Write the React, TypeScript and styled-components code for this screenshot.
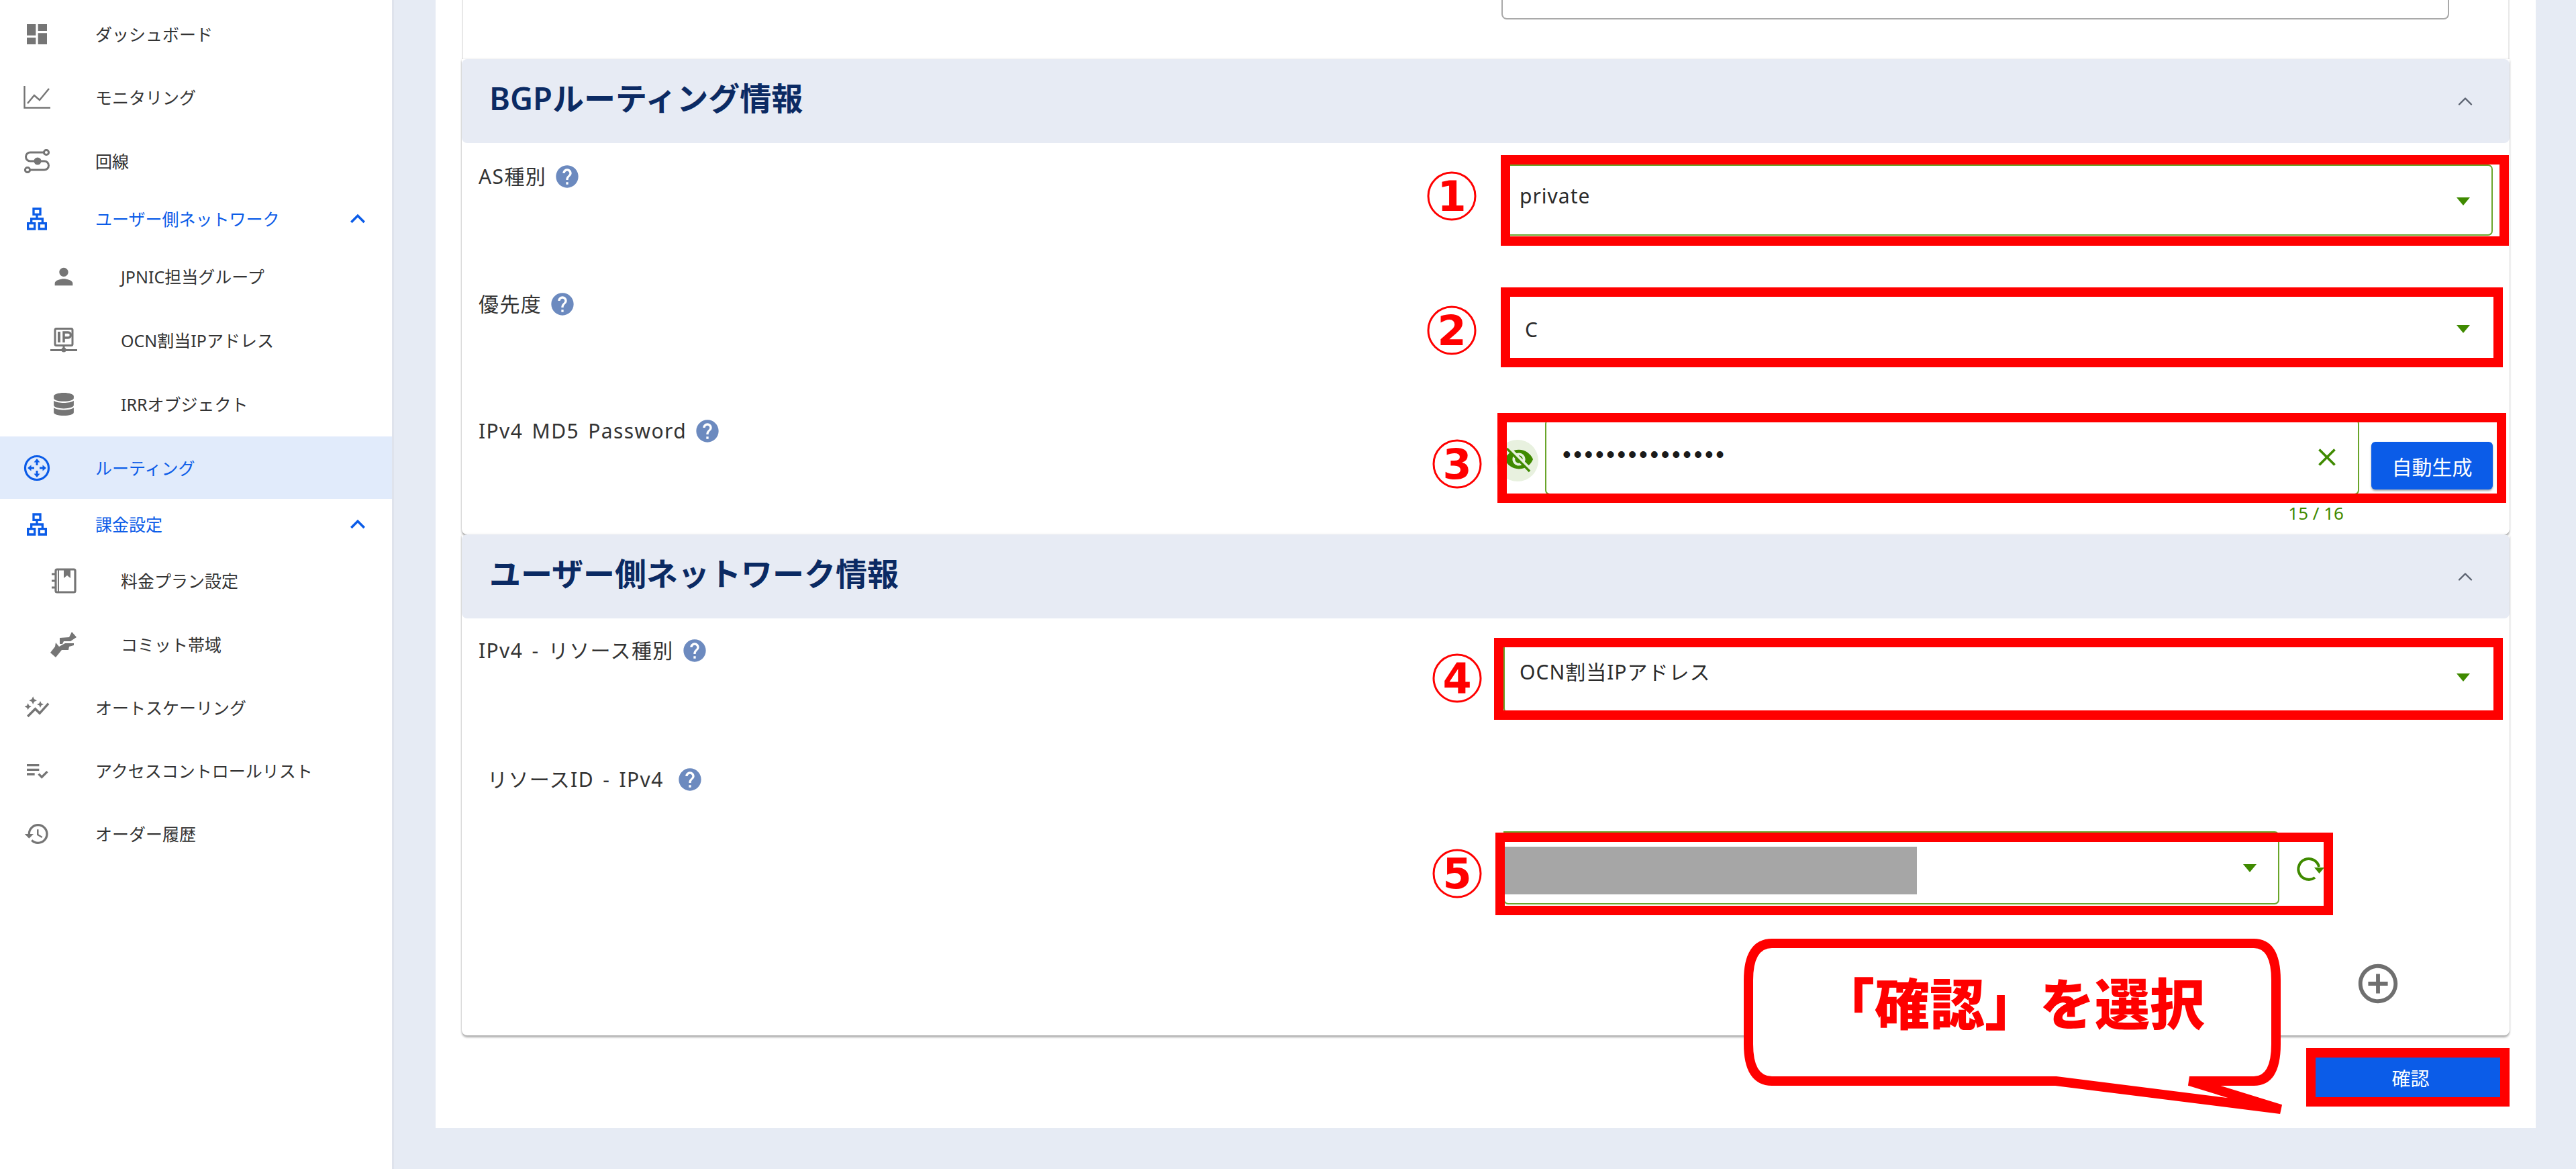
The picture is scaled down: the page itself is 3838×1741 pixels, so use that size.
import type { FC, ReactNode } from 'react';
import styled, { createGlobalStyle } from 'styled-components';
import { ChevronUp } from 'lucide-react';
import { FaDatabase } from 'react-icons/fa';
import {
  MdAddCircleOutline,
  MdAutoGraph,
  MdClose,
  MdDashboard,
  MdHelp,
  MdHistory,
  MdKeyboardArrowUp,
  MdOutlineLan,
  MdPerson,
  MdPlaylistAddCheck,
  MdVisibilityOff,
} from 'react-icons/md';

const BLUE = '#0b5ce8';
const GREEN = '#3f8a00';
const LINE_GREEN = '#6aa52a';
const GREY = '#757575';
const RED = '#ff0000';

const GlobalStyle = createGlobalStyle`
  html, body {
    margin: 0;
    padding: 0;
    background: #e6ebf4;
    font-family: 'Noto Sans', 'Noto Sans CJK JP', sans-serif;
    color: #2b2b2b;
  }
`;

const Page = styled.div`
  position: relative;
  display: grid;
  grid-template-columns: 587px 1fr;
  width: 3838px;
  height: 1741px;
  overflow: hidden;
  background: #e6ebf4;
`;

const Sidebar = styled.nav`
  box-sizing: border-box;
  height: 100%;
  padding-top: 4px;
  background: #fff;
  border-right: 3px solid #dfe3ec;
`;

const NavRow = styled.div<{ $height: number; $sub?: boolean; $active?: boolean; $blue?: boolean }>`
  display: flex;
  align-items: center;
  height: ${(p) => p.$height}px;
  padding-left: ${(p) => (p.$sub ? 75 : 35)}px;
  background: ${(p) => (p.$active ? '#e1ebfb' : 'transparent')};
  color: ${(p) => (p.$blue ? BLUE : GREY)};
`;

const NavIcon = styled.span`
  display: flex;
  align-items: center;
  justify-content: center;
  width: 40px;
  height: 40px;
  flex: none;
`;

const NavLabel = styled.span<{ $sub?: boolean; $blue?: boolean }>`
  margin-left: ${(p) => (p.$sub ? 65 : 67)}px;
  font-size: 25px;
  line-height: 34px;
  color: ${(p) => (p.$blue ? BLUE : '#333')};
`;

const NavChevron = styled.span`
  display: flex;
  margin-left: auto;
  margin-right: 29px;
  color: ${BLUE};
`;

const Main = styled.main`
  padding-left: 62px;
`;

const Panel = styled.div`
  box-sizing: border-box;
  width: 3129px;
  height: 1680px;
  padding: 0 39px;
  background: #fff;
`;

const TopStub = styled.div`
  height: 88px;
  padding: 0 88px 0 1547px;
  border-left: 2px solid #e8e8e8;
  border-right: 2px solid #e8e8e8;
  box-sizing: border-box;
`;

const StubInput = styled.div`
  box-sizing: border-box;
  height: 29px;
  border: 2px solid #a9a9a9;
  border-top: 0;
  border-radius: 0 0 8px 8px;
`;

const Card = styled.section`
  border-radius: 0 0 8px 8px;
  box-shadow: 0 3px 3px rgba(0, 0, 0, 0.3), 0 0 3px rgba(0, 0, 0, 0.12);
`;

const SectionHead = styled.header`
  display: flex;
  align-items: center;
  justify-content: space-between;
  box-sizing: border-box;
  height: 125px;
  padding: 0 48px 0 41px;
  background: #e7ebf4;
  border-radius: 8px;
`;

const SectionTitle = styled.h2`
  margin: 0 0 10px;
  font-size: 47px;
  line-height: 60px;
  font-weight: 600;
  color: #0b2a63;
`;

const HeadChevron = styled.span`
  display: flex;
  color: #5b6270;
`;

const Body = styled.div<{ $height: number }>`
  height: ${(p) => p.$height}px;
`;

const FormRow = styled.div<{ $height: number }>`
  display: grid;
  grid-template-columns: 1552px 1474px;
  height: ${(p) => p.$height}px;
`;

const FieldLabel = styled.div<{ $top: number; $left?: number; $gap?: number }>`
  display: flex;
  align-items: center;
  gap: ${(p) => p.$gap ?? 11}px;
  height: 34px;
  padding: ${(p) => p.$top}px 0 0 ${(p) => p.$left ?? 25}px;
  font-size: 30px;
  line-height: 34px;
  letter-spacing: 1.400px;
  word-spacing: 4px;
  color: #333;
`;

const HelpIcon = styled(MdHelp)`
  flex: none;
  color: #6c8abf;
`;

const Control = styled.div<{ $top: number; $bleed?: number }>`
  padding-top: ${(p) => p.$top}px;
  margin-right: -${(p) => p.$bleed ?? 0}px;
`;

const SelectBox = styled.div<{ $height: number; $inset: number; $trail?: number }>`
  box-sizing: border-box;
  display: flex;
  align-items: center;
  justify-content: space-between;
  height: ${(p) => p.$height}px;
  padding: 0 ${(p) => p.$trail ?? 34}px 0 ${(p) => p.$inset}px;
  border: 2px solid ${LINE_GREEN};
  border-radius: 7px;
  background: #fff;
`;

const SelectValue = styled.span<{ $shift: number }>`
  margin-top: ${(p) => p.$shift}px;
  font-size: 30px;
  line-height: 40px;
  letter-spacing: 1px;
  color: #2b2b2b;
`;

const SelectArrow = styled.span<{ $shift: number }>`
  width: 0;
  height: 0;
  margin-top: ${(p) => p.$shift}px;
  border-left: 10px solid transparent;
  border-right: 10px solid transparent;
  border-top: 12px solid ${GREEN};
`;

const Redacted = styled.span`
  width: 614px;
  height: 71px;
  margin-top: 8px;
  background: #a6a6a6;
`;

const PasswordLine = styled.div`
  display: flex;
  align-items: flex-start;
`;

const EyeButton = styled.span`
  display: flex;
  align-items: center;
  justify-content: center;
  flex: none;
  width: 62px;
  height: 62px;
  margin: 31px 10px 0 -10px;
  padding-bottom: 5px;
  padding-left: 3px;
  box-sizing: border-box;
  border-radius: 50%;
  background: #e8f1df;
  color: ${GREEN};
`;

const PasswordColumn = styled.div`
  width: 1213px;
  margin-right: 18px;
  flex: none;
`;

const PasswordBox = styled.div`
  box-sizing: border-box;
  display: flex;
  align-items: center;
  justify-content: space-between;
  height: 113px;
  padding: 0 24px 0 24px;
  border: 2px solid ${LINE_GREEN};
  border-radius: 7px;
  color: ${GREEN};
`;

const Dots = styled.span`
  margin-top: -8px;
  font-family: 'Liberation Sans', sans-serif;
  font-size: 36px;
  line-height: 40px;
  letter-spacing: 3.700px;
  color: #1a1a1a;
`;

const Counter = styled.div`
  padding: 13px 23px 0 0;
  font-size: 26px;
  line-height: 28px;
  text-align: right;
  color: ${GREEN};
`;

const PrimaryButton = styled.button<{ $width: number; $height: number }>`
  width: ${(p) => p.$width}px;
  height: ${(p) => p.$height}px;
  flex: none;
  padding: 0;
  border: 0;
  border-radius: 6px;
  background: ${BLUE};
  color: #fff;
  font-family: inherit;
  font-size: 30px;
  box-shadow: 0 2px 3px rgba(0, 0, 0, 0.35);
`;

const GenerateButton = styled(PrimaryButton)`
  margin-top: 34px;
`;

const ResourceLine = styled.div`
  display: flex;
  align-items: stretch;
`;

const ResourceSelect = styled(SelectBox)`
  width: 1156px;
  border-radius: 0 7px 7px 7px;
`;

const RefreshSlot = styled.span`
  display: flex;
  align-items: center;
  padding: 4px 0 0 23px;
  color: ${GREEN};
`;

const AddLine = styled.div`
  display: flex;
  justify-content: flex-end;
  padding: 83px 161px 0 0;
  color: #6f6f6f;
`;

const ActionBar = styled.div`
  display: flex;
  justify-content: flex-end;
  padding: 33px 14px 0 0;
`;

const ConfirmButton = styled(PrimaryButton)`
  padding-left: 8px;
  border-radius: 0;
  box-shadow: none;
  font-size: 28px;
`;

/* annotations laid over the form */
const RedBox = styled.div<{ $x: number; $y: number; $w: number; $h: number }>`
  position: absolute;
  box-sizing: border-box;
  left: ${(p) => p.$x}px;
  top: ${(p) => p.$y}px;
  width: ${(p) => p.$w}px;
  height: ${(p) => p.$h}px;
  border: 14px solid ${RED};
`;

const Step = styled.span<{ $x: number; $y: number }>`
  position: absolute;
  box-sizing: border-box;
  display: flex;
  align-items: center;
  justify-content: center;
  left: ${(p) => p.$x}px;
  top: ${(p) => p.$y}px;
  width: 73px;
  height: 73px;
  transform: translate(-50%, -50%);
  border: 3px solid ${RED};
  border-radius: 50%;
  font-family: 'DejaVu Sans', sans-serif;
  font-size: 62px;
  font-weight: 700;
  line-height: 1;
  color: ${RED};
`;

const Callout = styled.div`
  position: absolute;
  left: 2590px;
  top: 1390px;
  width: 830px;
  height: 280px;
`;

const CalloutText = styled.span`
  position: absolute;
  left: 121px;
  top: 46px;
  font-size: 82px;
  font-weight: 900;
  line-height: 116px;
  white-space: nowrap;
  color: ${RED};
`;

const MonitorIcon = () => (
  <svg width="40" height="34" viewBox="0 0 40 34" fill="none" stroke="currentColor" strokeWidth="2.4">
    <path d="M1.5 0v32.500H40" />
    <path d="M6 26l10-12 8 7L38 4" />
  </svg>
);

const CircuitIcon = () => (
  <svg width="40" height="36" viewBox="0 0 40 36" fill="none" stroke="currentColor" strokeWidth="3">
    <circle cx="34" cy="5" r="3.600" />
    <circle cx="6" cy="31" r="3.600" />
    <circle cx="21" cy="18" r="4" fill="currentColor" />
    <path d="M30 5H10a6.500 6.500 0 0 0 0 13h21a6.500 6.500 0 0 1 0 13H10" />
  </svg>
);

const IpIcon = () => (
  <svg width="40" height="38" viewBox="0 0 40 38" fill="none" stroke="currentColor" strokeWidth="3">
    <rect x="7" y="1.500" width="26" height="25" rx="2" />
    <path d="M13 6v16" strokeWidth="4" />
    <path d="M20 22V7h6.500a4 4 0 0 1 0 8H20" strokeWidth="3.500" />
    <path d="M20 27v6M0 33.500h40" />
    <circle cx="20" cy="33" r="3.500" fill="currentColor" stroke="none" />
  </svg>
);

const RouterIcon = () => (
  <svg width="40" height="40" viewBox="0 0 40 40" fill="currentColor">
    <circle cx="20" cy="20" r="17.500" fill="none" stroke="currentColor" strokeWidth="3.200" />
    <path d="M20 6l4.500 5.500h-3V16h-3v-4.500h-3zM20 34l-4.500-5.500h3V24h3v4.500h3zM6 20l5.500-4.500v3H16v3h-4.500v3zM34 20l-5.500 4.500v-3H24v-3h4.500v-3z" />
  </svg>
);

const NotebookIcon = () => (
  <svg width="38" height="38" viewBox="0 0 38 38" fill="none" stroke="currentColor" strokeWidth="3.200">
    <rect x="7" y="2" width="29" height="34" rx="2" />
    <path d="M11 2v34" strokeWidth="2" />
    <path d="M19 2h10v13l-5-4-5 4z" fill="currentColor" stroke="none" />
    <path d="M1 9h7M1 19h7M1 29h7" />
  </svg>
);

const CommitIcon = () => (
  <svg width="40" height="38" viewBox="0 0 40 38" fill="currentColor">
    <path d="M14 18V9l14-1 4-8 7 8-9 6H20l-2 4z" />
    <path d="M0 31l7-9 1-6 5 6 9-5h13v3l-7 2-1 5H17L8 38z" />
  </svg>
);

const RefreshIcon = () => (
  <svg width="44" height="44" viewBox="0 0 44 44" fill="none" stroke="currentColor" strokeWidth="4">
    <path d="M30 34A15.500 15.500 0 1 1 36 18" />
    <path d="M29 19h15l-7.500 9z" fill="currentColor" stroke="none" />
  </svg>
);

type NavItem = {
  label: string;
  icon: ReactNode;
  height: number;
  sub?: boolean;
  active?: boolean;
  blue?: boolean;
  open?: boolean;
};

const NAV_ITEMS: NavItem[] = [
  { label: 'ダッシュボード', icon: <MdDashboard size={50} />, height: 94 },
  { label: 'モニタリング', icon: <MonitorIcon />, height: 94 },
  { label: '回線', icon: <CircuitIcon />, height: 95 },
  { label: 'ユーザー側ネットワーク', icon: <MdOutlineLan size={48} />, height: 78, blue: true, open: true },
  { label: 'JPNIC担当グループ', icon: <MdPerson size={48} />, height: 94, sub: true },
  { label: 'OCN割当IPアドレス', icon: <IpIcon />, height: 95, sub: true },
  { label: 'IRRオブジェクト', icon: <FaDatabase size={34} />, height: 96, sub: true },
  { label: 'ルーティング', icon: <RouterIcon />, height: 93, active: true, blue: true },
  { label: '課金設定', icon: <MdOutlineLan size={48} />, height: 75, blue: true, open: true },
  { label: '料金プラン設定', icon: <NotebookIcon />, height: 94, sub: true },
  { label: 'コミット帯域', icon: <CommitIcon />, height: 95, sub: true },
  { label: 'オートスケーリング', icon: <MdAutoGraph size={52} />, height: 94 },
  { label: 'アクセスコントロールリスト', icon: <MdPlaylistAddCheck size={50} />, height: 94 },
  { label: 'オーダー履歴', icon: <MdHistory size={48} />, height: 94 },
];

const Section: FC<{ title: string; bodyHeight: number; children: ReactNode }> = ({ title, bodyHeight, children }) => (
  <Card>
    <SectionHead>
      <SectionTitle>{title}</SectionTitle>
      <HeadChevron>
        <ChevronUp size={36} strokeWidth={1.6} />
      </HeadChevron>
    </SectionHead>
    <Body $height={bodyHeight}>{children}</Body>
  </Card>
);

const Select: FC<{
  value: string;
  height?: number;
  inset: number;
  trail?: number;
  valueShift: number;
  arrowShift: number;
}> = ({ value, height = 106, inset, trail, valueShift, arrowShift }) => (
  <SelectBox $height={height} $inset={inset} $trail={trail}>
    <SelectValue $shift={valueShift}>{value}</SelectValue>
    <SelectArrow $shift={arrowShift} />
  </SelectBox>
);

const App: FC = () => (
  <Page>
    <GlobalStyle />
    <Sidebar>
      {NAV_ITEMS.map((item) => (
        <NavRow key={item.label} $height={item.height} $sub={item.sub} $active={item.active} $blue={item.blue}>
          <NavIcon>{item.icon}</NavIcon>
          <NavLabel $sub={item.sub} $blue={item.blue}>
            {item.label}
          </NavLabel>
          {item.open && (
            <NavChevron>
              <MdKeyboardArrowUp size={44} />
            </NavChevron>
          )}
        </NavRow>
      ))}
    </Sidebar>

    <Main>
      <Panel>
        <TopStub>
          <StubInput />
        </TopStub>

        <Section title="BGPルーティング情報" bodyHeight={583}>
          <FormRow $height={190}>
            <FieldLabel $top={33}>
              AS種別
              <HelpIcon size={40} />
            </FieldLabel>
            <Control $top={32}>
              <Select value="private" inset={22} trail={32} valueShift={-12} arrowShift={4} />
            </Control>
          </FormRow>
          <FormRow $height={189}>
            <FieldLabel $top={33}>
              優先度
              <HelpIcon size={40} />
            </FieldLabel>
            <Control $top={32} $bleed={6}>
              <Select value="C" inset={30} trail={38} valueShift={6} arrowShift={4} />
            </Control>
          </FormRow>
          <FormRow $height={204}>
            <FieldLabel $top={33}>
              IPv4 MD5 Password
              <HelpIcon size={40} />
            </FieldLabel>
            <Control $top={32}>
              <PasswordLine>
                <EyeButton>
                  <MdVisibilityOff size={46} />
                </EyeButton>
                <PasswordColumn>
                  <PasswordBox>
                    <Dots>•••••••••••••••</Dots>
                    <MdClose size={44} />
                  </PasswordBox>
                  <Counter>15 / 16</Counter>
                </PasswordColumn>
                <GenerateButton $width={181} $height={71}>
                  自動生成
                </GenerateButton>
              </PasswordLine>
            </Control>
          </FormRow>
        </Section>

        <Section title="ユーザー側ネットワーク情報" bodyHeight={621}>
          <FormRow $height={190}>
            <FieldLabel $top={31}>
              IPv4 - リソース種別
              <HelpIcon size={40} />
            </FieldLabel>
            <Control $top={30} $bleed={6}>
              <Select value="OCN割当IPアドレス" height={111} inset={22} trail={38} valueShift={-12} arrowShift={4} />
            </Control>
          </FormRow>
          <FormRow $height={236}>
            <FieldLabel $top={33} $left={38} $gap={19}>
              リソースID - IPv4
              <HelpIcon size={40} />
            </FieldLabel>
            <Control $top={127}>
              <ResourceLine>
                <ResourceSelect $height={109} $inset={0} $trail={32}>
                  <Redacted />
                  <SelectArrow $shift={0} />
                </ResourceSelect>
                <RefreshSlot>
                  <RefreshIcon />
                </RefreshSlot>
              </ResourceLine>
            </Control>
          </FormRow>
          <AddLine>
            <MdAddCircleOutline size={70} />
          </AddLine>
        </Section>

        <ActionBar>
          <ConfirmButton $width={275} $height={59}>
            確認
          </ConfirmButton>
        </ActionBar>
      </Panel>
    </Main>

    <RedBox $x={2236} $y={231} $w={1502} $h={135} />
    <RedBox $x={2236} $y={428} $w={1493} $h={119} />
    <RedBox $x={2231} $y={615} $w={1503} $h={134} />
    <RedBox $x={2226} $y={950} $w={1503} $h={122} />
    <RedBox $x={2228} $y={1240} $w={1248} $h={123} />
    <RedBox $x={3436} $y={1561} $w={303} $h={87} />

    <Step $x={2163} $y={292}>1</Step>
    <Step $x={2163} $y={492}>2</Step>
    <Step $x={2171} $y={691}>3</Step>
    <Step $x={2171} $y={1010}>4</Step>
    <Step $x={2171} $y={1301}>5</Step>

    <Callout>
      <svg width="830" height="280" viewBox="2590 1390 830 280">
        <path
          d="M2640 1405H3358Q3391 1405 3391 1460V1555Q3391 1610 3358 1610H3262L3398 1652L3063 1610H2640Q2605 1610 2605 1555V1460Q2605 1405 2640 1405Z"
          fill="#fff"
          stroke={RED}
          strokeWidth="14"
          strokeLinejoin="bevel"
        />
      </svg>
      <CalloutText>「確認」を選択</CalloutText>
    </Callout>
  </Page>
);

export default App;
